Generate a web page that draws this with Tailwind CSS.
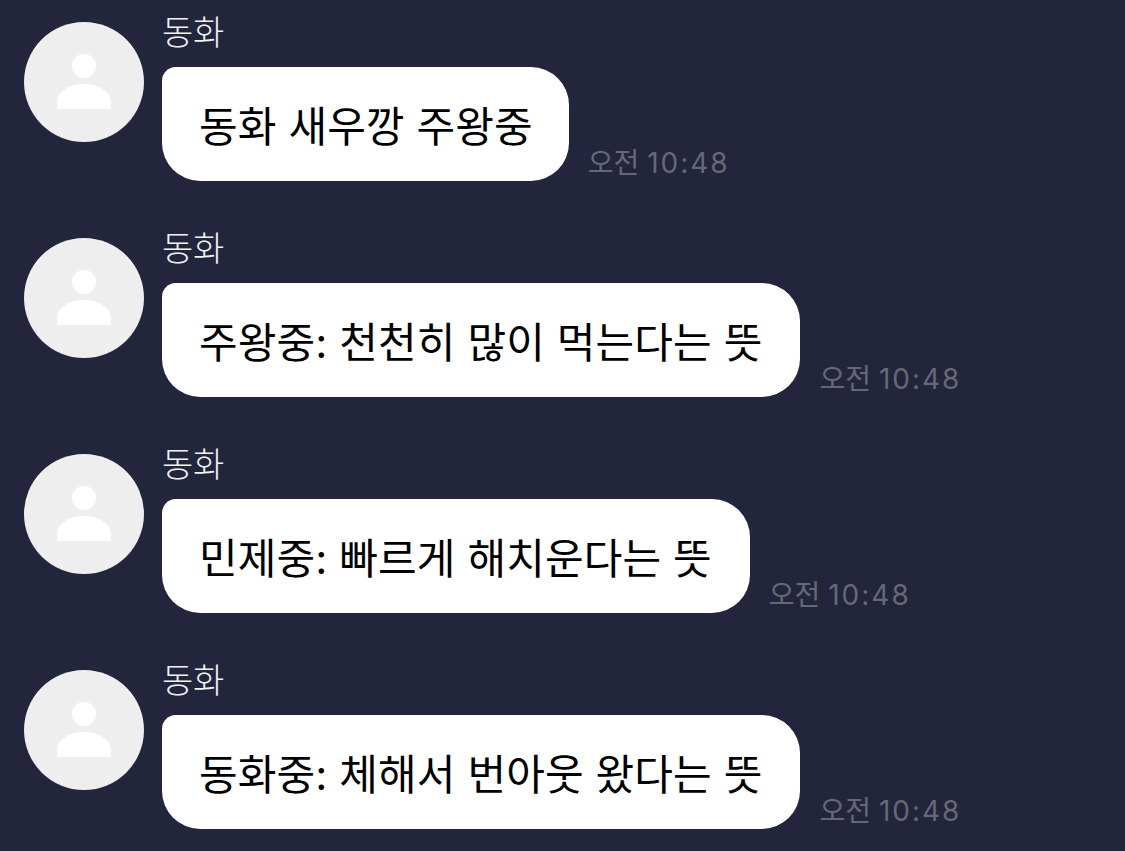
<!DOCTYPE html>
<html lang="ko">
<head>
  <meta charset="UTF-8" />
  <title>동화</title>
  <script src="https://cdn.jsdelivr.net/npm/@tailwindcss/browser@4"></script>
</head>
<body class="bg-[#22253b] overflow-hidden font-['Inter','Noto_Sans_CJK_KR',sans-serif]">
  <div class="h-[851px] pt-[13px] pl-[24px] flex flex-col gap-[36px]">

    <!-- message -->
    <div class="flex gap-[18px] h-[180px]">
      <div class="w-[120px] h-[120px] mt-[9px] shrink-0 rounded-full bg-[#eeeeee] flex items-center justify-center">
        <svg width="54" height="56" viewBox="0 0 54 56" fill="#ffffff"><circle cx="27" cy="12" r="12"/><path d="M0 48C0 38 12 30 27 30S54 38 54 48V54Q54 55 53 55H1Q0 55 0 54z"/></svg>
      </div>
      <div>
        <p class="text-[34px] leading-[40px] text-[#f2f2f2] font-light tracking-[-0.3px]">동화</p>
        <div class="flex items-end gap-[19px] mt-[14px]">
          <div class="h-[114px] rounded-[38px] rounded-tl-[14px] bg-white pl-[37px] pr-[36px] pt-[5px] flex items-center text-[42px] text-black tracking-[0.1px]">동화 새우깡 주왕중</div>
          <span class="text-[28px] leading-[36px] text-[#666877]">오전 <span class="tracking-[2px]">10:48</span></span>
        </div>
      </div>
    </div>

    <div class="flex gap-[18px] h-[180px]">
      <div class="w-[120px] h-[120px] mt-[9px] shrink-0 rounded-full bg-[#eeeeee] flex items-center justify-center">
        <svg width="54" height="56" viewBox="0 0 54 56" fill="#ffffff"><circle cx="27" cy="12" r="12"/><path d="M0 48C0 38 12 30 27 30S54 38 54 48V54Q54 55 53 55H1Q0 55 0 54z"/></svg>
      </div>
      <div>
        <p class="text-[34px] leading-[40px] text-[#f2f2f2] font-light tracking-[-0.3px]">동화</p>
        <div class="flex items-end gap-[19px] mt-[14px]">
          <div class="h-[114px] rounded-[38px] rounded-tl-[14px] bg-white pl-[37px] pr-[38px] pt-[5px] flex items-center text-[42px] text-black tracking-[0.1px]">주왕중: 천천히 많이 먹는다는 뜻</div>
          <span class="text-[28px] leading-[36px] text-[#666877]">오전 <span class="tracking-[2px]">10:48</span></span>
        </div>
      </div>
    </div>

    <div class="flex gap-[18px] h-[180px]">
      <div class="w-[120px] h-[120px] mt-[9px] shrink-0 rounded-full bg-[#eeeeee] flex items-center justify-center">
        <svg width="54" height="56" viewBox="0 0 54 56" fill="#ffffff"><circle cx="27" cy="12" r="12"/><path d="M0 48C0 38 12 30 27 30S54 38 54 48V54Q54 55 53 55H1Q0 55 0 54z"/></svg>
      </div>
      <div>
        <p class="text-[34px] leading-[40px] text-[#f2f2f2] font-light tracking-[-0.3px]">동화</p>
        <div class="flex items-end gap-[19px] mt-[14px]">
          <div class="h-[114px] rounded-[38px] rounded-tl-[14px] bg-white pl-[37px] pr-[38px] pt-[5px] flex items-center text-[42px] text-black tracking-[0.1px]">민제중: 빠르게 해치운다는 뜻</div>
          <span class="text-[28px] leading-[36px] text-[#666877]">오전 <span class="tracking-[2px]">10:48</span></span>
        </div>
      </div>
    </div>

    <div class="flex gap-[18px] h-[180px]">
      <div class="w-[120px] h-[120px] mt-[9px] shrink-0 rounded-full bg-[#eeeeee] flex items-center justify-center">
        <svg width="54" height="56" viewBox="0 0 54 56" fill="#ffffff"><circle cx="27" cy="12" r="12"/><path d="M0 48C0 38 12 30 27 30S54 38 54 48V54Q54 55 53 55H1Q0 55 0 54z"/></svg>
      </div>
      <div>
        <p class="text-[34px] leading-[40px] text-[#f2f2f2] font-light tracking-[-0.3px]">동화</p>
        <div class="flex items-end gap-[19px] mt-[14px]">
          <div class="h-[114px] rounded-[38px] rounded-tl-[14px] bg-white pl-[37px] pr-[38px] pt-[5px] flex items-center text-[42px] text-black tracking-[0.1px]">동화중: 체해서 번아웃 왔다는 뜻</div>
          <span class="text-[28px] leading-[36px] text-[#666877]">오전 <span class="tracking-[2px]">10:48</span></span>
        </div>
      </div>
    </div>

  </div>
</body>
</html>
